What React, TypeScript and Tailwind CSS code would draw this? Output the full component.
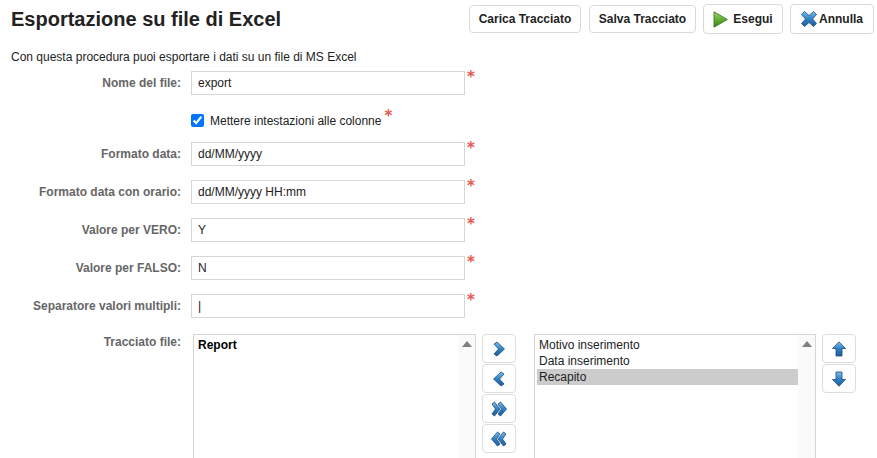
import type { ReactNode } from "react";

// ── Icons ─────────────────────────────────────────────────────────────────

function BlueIcon({ id, d }: { id: string; d: string }) {
  return (
    <svg width="16" height="16" viewBox="0 0 16 16" className="block">
      <defs>
        <linearGradient id={id} x1="0" y1="0" x2="0" y2="1">
          <stop offset="0" stopColor="#7cc0ec" />
          <stop offset="0.5" stopColor="#2f80c4" />
          <stop offset="1" stopColor="#1c5f9f" />
        </linearGradient>
      </defs>
      <path d={d} fill={`url(#${id})`} stroke="#1d4a78" strokeWidth="0.8" strokeLinejoin="round" />
    </svg>
  );
}

function PlayIcon() {
  return (
    <svg width="15" height="17" viewBox="0 0 15 17" className="block">
      <defs>
        <linearGradient id="play" x1="0" y1="0" x2="0" y2="1">
          <stop offset="0" stopColor="#9fd465" />
          <stop offset="0.55" stopColor="#5fa832" />
          <stop offset="1" stopColor="#37801d" />
        </linearGradient>
      </defs>
      <path d="M1 .8 L14.4 8.5 L1 16.2 Z" fill="url(#play)" stroke="#3f7d24" strokeWidth="0.9" strokeLinejoin="round" />
    </svg>
  );
}

const icons = {
  cross: "M3.5 .5 L8 4.5 L12.5 .5 L15.5 3.5 L11.5 8 L15.5 12.5 L12.5 15.5 L8 11.5 L3.5 15.5 L.5 12.5 L4.5 8 L.5 3.5 Z",
  right: "M3 3 L6 1 L13.5 8 L6 15 L3 13 L7.5 8 Z",
  left: "M13 3 L10 1 L2.5 8 L10 15 L13 13 L8.5 8 Z",
  doubleRight: "M1 3 L3.5 1 L9 8 L3.5 15 L1 13 L4.5 8 Z M7 3 L9.5 1 L15.5 8 L9.5 15 L7 13 L10.5 8 Z",
  doubleLeft: "M15 3 L12.5 1 L7 8 L12.5 15 L15 13 L11.5 8 Z M9 3 L6.5 1 L.5 8 L6.5 15 L9 13 L5.5 8 Z",
  up: "M8 .8 L14.5 7.5 L11 7.5 L11 15 L5 15 L5 7.5 L1.5 7.5 Z",
  down: "M5 1 L11 1 L11 8.5 L14.5 8.5 L8 15.2 L1.5 8.5 L5 8.5 Z",
};

// ── Parts ─────────────────────────────────────────────────────────────────

function Required({ className }: { className: string }) {
  return (
    <span className={`text-[#e8584f] text-[15px] leading-none font-bold font-['DejaVu_Sans',sans-serif] ${className}`}>
      *
    </span>
  );
}

function Row({ label, value, className }: { label: string; value: string; className: string }) {
  return (
    <div className={`flex items-start ${className}`}>
      <label className="w-[181px] pt-[5px] text-right font-bold text-[#666666] leading-[14px]">{label}</label>
      <input
        readOnly
        value={value}
        className="ml-[10px] w-[274px] h-[24px] border border-[#d6d6d6] px-[6px] text-[12px] text-[#222222] outline-none"
      />
      <Required className="ml-[2px] -mt-[1px]" />
    </div>
  );
}

function TopButton({ children, className }: { children: ReactNode; className: string }) {
  return (
    <button
      className={`flex items-center justify-center border border-[#d9d9d9] rounded-[4px] bg-white font-bold text-[#222222] ${className}`}
    >
      {children}
    </button>
  );
}

function SquareButton({ children }: { children: ReactNode }) {
  return (
    <button className="flex items-center justify-center w-[34px] h-[29px] mb-px border border-[#dddddd] rounded-[4px] bg-white">
      {children}
    </button>
  );
}

function ListBox({ className, children }: { className: string; children: ReactNode }) {
  return (
    <div className={`relative h-[150px] border border-[#d6d6d6] bg-white ${className}`}>
      {children}
      <div className="absolute top-0 right-0 bottom-0 w-[17px] bg-[#fafafa] flex justify-center pt-[6px]">
        <span className="block w-0 h-0 border-x-[5px] border-x-transparent border-b-[6px] border-b-[#808080]" />
      </div>
    </div>
  );
}

// ── App ───────────────────────────────────────────────────────────────────

export default function App() {
  return (
    <div className="w-[877px] h-[458px] overflow-hidden bg-white text-[12px] text-[#222222] font-['Liberation_Sans',Arial,sans-serif]">
      <header className="flex items-start pt-[4px] pl-[11px] pr-[3px]">
        <h1 className="text-[20px] font-bold leading-[30px] text-[#222222] flex-1">Esportazione su file di Excel</h1>
        <TopButton className="mt-px w-[112px] h-[28px]">Carica Tracciato</TopButton>
        <TopButton className="mt-px ml-[8px] w-[107px] h-[28px]">Salva Tracciato</TopButton>
        <TopButton className="ml-[7px] w-[80px] h-[30px] gap-[5px]">
          <PlayIcon />
          <span className="-mt-[1px]">Esegui</span>
        </TopButton>
        <TopButton className="ml-[7px] w-[84px] h-[30px] gap-[2px]">
          <BlueIcon id="cross" d={icons.cross} />
          <span className="-mt-[1px]">Annulla</span>
        </TopButton>
      </header>

      <p className="pl-[11px] mt-[16px] leading-[14px]">Con questa procedura puoi esportare i dati su un file di MS Excel</p>

      <Row label="Nome del file:" value="export" className="mt-[7px]" />

      <div className="flex items-start mt-[15px] pl-[191px] h-[23px]">
        <input type="checkbox" defaultChecked className="mt-[4px] w-[13px] h-[13px] accent-[#0075ff]" />
        <span className="ml-[6px] mt-[4px] leading-[14px]">Mettere intestazioni alle colonne</span>
        <Required className="ml-[3px] -mt-[1px]" />
      </div>

      <Row label="Formato data:" value="dd/MM/yyyy" className="mt-[9px]" />
      <Row label="Formato data con orario:" value="dd/MM/yyyy HH:mm" className="mt-[14px]" />
      <Row label="Valore per VERO:" value="Y" className="mt-[14px]" />
      <Row label="Valore per FALSO:" value="N" className="mt-[14px]" />
      <Row label="Separatore valori multipli:" value="|" className="mt-[14px]" />

      <div className="flex items-start mt-[16px]">
        <label className="w-[181px] pt-[1px] text-right font-bold text-[#666666] leading-[14px]">Tracciato file:</label>
        <ListBox className="ml-[12px] w-[283px]">
          <div className="pl-[4px] pt-[3px] font-bold text-black leading-[14px]">Report</div>
        </ListBox>
        <div className="ml-[6px] flex flex-col">
          <SquareButton>
            <BlueIcon id="right" d={icons.right} />
          </SquareButton>
          <SquareButton>
            <BlueIcon id="left" d={icons.left} />
          </SquareButton>
          <SquareButton>
            <BlueIcon id="dright" d={icons.doubleRight} />
          </SquareButton>
          <SquareButton>
            <BlueIcon id="dleft" d={icons.doubleLeft} />
          </SquareButton>
        </div>
        <ListBox className="ml-[18px] w-[282px]">
          <div className="pl-[2px] pt-[2px] pr-[17px] leading-[16px] text-[#222222]">
            <div className="pl-[2px]">Motivo inserimento</div>
            <div className="pl-[2px]">Data inserimento</div>
            <div className="pl-[2px] bg-[#cccccc]">Recapito</div>
          </div>
        </ListBox>
        <div className="ml-[6px] flex flex-col">
          <SquareButton>
            <BlueIcon id="up" d={icons.up} />
          </SquareButton>
          <SquareButton>
            <BlueIcon id="down" d={icons.down} />
          </SquareButton>
        </div>
      </div>
    </div>
  );
}
